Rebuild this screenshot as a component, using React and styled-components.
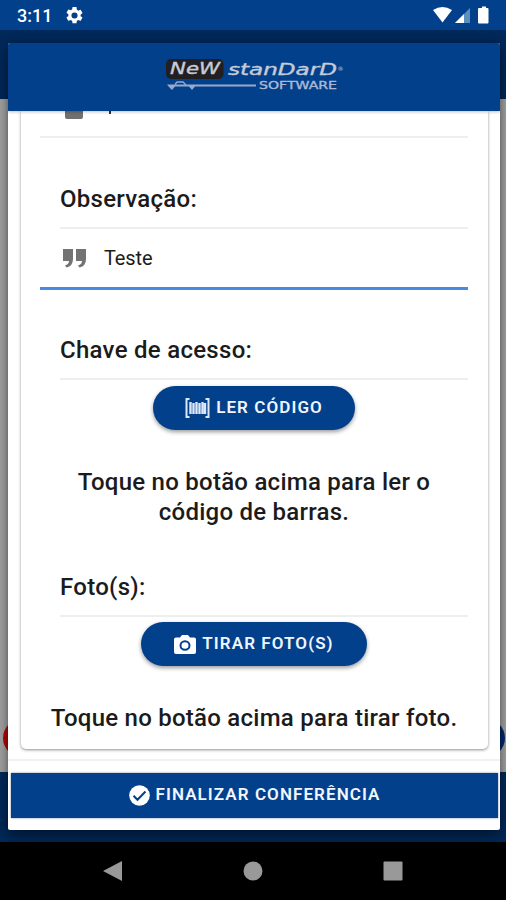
import React from "react";
import styled, { createGlobalStyle } from "styled-components";

const Global = createGlobalStyle`
  * { box-sizing: border-box; }
  body { margin: 0; background: #000; font-family: Roboto, "Noto Sans", sans-serif; color: #1b1b1b; }
`;

const Screen = styled.div`
  width: 506px;
  height: 900px;
  display: flex;
  flex-direction: column;
  overflow: hidden;
`;
const StatusBar = styled.header`
  height: 30px;
  flex: none;
  display: flex;
  align-items: center;
  justify-content: space-between;
  padding: 1px 14px 0 17px;
  background: #03408b;
  color: #fff;
`;
const StatusGroup = styled.div`
  display: flex;
  align-items: center;
  gap: ${(p) => p.$gap}px;
`;
const Clock = styled.span`
  font-size: 18px;
  font-weight: 500;
  width: 34px;
  white-space: nowrap;
`;
const Stage = styled.main`
  flex: 1;
  position: relative;
  display: flex;
  flex-direction: column;
`;
const BackHeader = styled.div`
  height: 69px;
  background: #002858;
`;
const BackBody = styled.div`
  flex: 1;
  background: #a3a3a3;
  display: flex;
  align-items: flex-end;
  justify-content: space-between;
  padding: 0 1px 15px 3px;
  overflow: hidden;
`;
const BackButton = styled.div`
  width: 70px;
  height: 38px;
  border-radius: 19px;
  background: ${(p) => p.$color};
`;
const BackFooter = styled.div`
  height: 70px;
  background: #00295a;
`;
const Modal = styled.section`
  position: absolute;
  left: 8px;
  top: 13px;
  width: 492px;
  height: 787px;
  display: flex;
  flex-direction: column;
  background: #fff;
  border-radius: 2px;
  overflow: hidden;
  box-shadow: 0 8px 16px rgba(0, 0, 0, 0.42), 0 0 4px rgba(0, 0, 0, 0.25);
`;
const ModalHeader = styled.div`
  height: 68px;
  flex: none;
  display: flex;
  padding: 13px 0 0 156px;
  background: #03408b;
  box-shadow: 0 1px 3px rgba(0, 0, 0, 0.25);
  z-index: 1;
`;
const Content = styled.div`
  flex: none;
  height: 650px;
  padding: 0 12px 12px 13px;
  border-bottom: 2px solid #f1f1f1;
`;
const Card = styled.div`
  height: 638px;
  display: flex;
  flex-direction: column;
  padding: 0 20px 0 19px;
  border-radius: 0 0 5px 5px;
  box-shadow: 0 1px 3px rgba(0, 0, 0, 0.45);
`;
const ClippedField = styled.div`
  height: 27px;
  flex: none;
  display: flex;
  align-items: flex-start;
  gap: 26px;
  padding-left: 25px;
  border-bottom: 2px solid #eee;
`;
const ClippedIcon = styled.div`
  width: 18px;
  height: 8px;
  border-radius: 0 0 2px 2px;
  background: #707070;
`;
const ClippedGlyph = styled.div`
  width: 2px;
  height: 3px;
  background: #333;
`;
const Heading = styled.h2`
  margin: 0 0 0 20px;
  flex: none;
  height: ${(p) => p.$height}px;
  display: flex;
  align-items: flex-end;
  padding-bottom: ${(p) => p.$bottom || 13}px;
  border-bottom: 2px solid #eee;
  font-size: 24px;
  line-height: 30px;
  font-weight: 500;
  letter-spacing: 0.28px;
`;
const Field = styled.div`
  height: 61px;
  flex: none;
  display: flex;
  align-items: center;
  gap: 17px;
  padding-left: 23px;
  border-bottom: 3px solid #4b8ae3;
  font-size: 20px;
  letter-spacing: -0.1px;
`;
const Pill = styled.button`
  align-self: center;
  flex: none;
  width: ${(p) => p.$width}px;
  height: 44px;
  margin: ${(p) => p.$top}px 0 0;
  padding: 0 0 2px;
  border: 0;
  border-radius: 22px;
  display: flex;
  align-items: center;
  justify-content: center;
  gap: 6px;
  background: #03408b;
  color: #f0f5ff;
  font: 600 17px Roboto, sans-serif;
  letter-spacing: 1.08px;
  white-space: nowrap;
  box-shadow: 0 2px 4px rgba(0, 0, 0, 0.4);
`;
const Hint = styled.p`
  margin: ${(p) => p.$top}px -12px 0;
  font-size: 24px;
  line-height: 29.5px;
  font-weight: 500;
  letter-spacing: 0.25px;
  text-align: center;
  white-space: nowrap;
`;
const Submit = styled.button`
  height: 45px;
  flex: none;
  margin: 12px 2px 0 3px;
  padding: 0 0 3px;
  border: 0;
  display: flex;
  align-items: center;
  justify-content: center;
  gap: 6px;
  background: #03408b;
  color: #f2f6ff;
  font: 600 17px Roboto, sans-serif;
  letter-spacing: 1.08px;
  white-space: nowrap;
  box-shadow: 0 0 2px #7787a2;
`;
const IconSlot = styled.span`
  display: flex;
  padding-top: 2px;
`;
const NavBar = styled.nav`
  height: 58px;
  flex: none;
  display: grid;
  grid-template-columns: repeat(3, 140px);
  justify-content: center;
  justify-items: center;
  align-items: center;
  background: #000;
`;

const Logo = () => (
  <svg width="182" height="38" viewBox="0 0 182 38" fontFamily="DejaVu Sans, sans-serif">
    <rect x="2" y="3" width="57.500" height="20" rx="5" fill="#211f22" />
    <g fill="#c5cbd7" stroke="#c5cbd7" strokeWidth=".35">
      <text x="6" y="18" fontSize="15" fontStyle="italic" textLength="50" lengthAdjust="spacingAndGlyphs">NeW</text>
      <text x="64" y="18.500" fontSize="15" fontStyle="italic" textLength="109" lengthAdjust="spacingAndGlyphs">stanDarD</text>
      <text x="173.500" y="15" fontSize="6" stroke="none">®</text>
      <text x="95" y="33" fontSize="10" textLength="78" lengthAdjust="spacingAndGlyphs" fill="#a9b9d6" stroke="#a9b9d6">SOFTWARE</text>
    </g>
    <path d="M11 28.500 13 26h6l3 3" fill="none" stroke="#97a9ce" strokeWidth="1.300" />
    <path d="M3 28.500h89v2H31l-3 3.500-3-3.500H11L8 34l-3-3Z" fill="#97a9ce" />
  </svg>
);

const Gear = () => (
  <svg width="17" height="17" viewBox="2 2 20 20" fill="#fff">
    <path d="M19.14 12.94c.04-.3.06-.61.06-.94s-.02-.64-.07-.94l2.03-1.58a.49.49 0 0 0 .12-.61l-1.92-3.32a.49.49 0 0 0-.59-.22l-2.39.96a7 7 0 0 0-1.62-.94l-.36-2.54A.48.48 0 0 0 13.92 2h-3.84a.48.48 0 0 0-.48.41l-.36 2.54c-.59.24-1.13.57-1.62.94l-2.39-.96a.49.49 0 0 0-.59.22L2.72 8.47a.48.48 0 0 0 .12.61l2.03 1.58c-.05.3-.09.63-.09.94s.02.64.07.94l-2.03 1.58a.49.49 0 0 0-.12.61l1.92 3.32c.12.22.37.29.59.22l2.39-.96c.5.38 1.03.7 1.62.94l.36 2.54c.05.24.24.41.48.41h3.84c.24 0 .44-.17.47-.41l.36-2.54c.59-.24 1.13-.56 1.62-.94l2.39.96c.22.08.47 0 .59-.22l1.92-3.32a.48.48 0 0 0-.12-.61l-2-1.22zM12 15.6a3.6 3.6 0 1 1 0-7.2 3.6 3.6 0 0 1 0 7.2z" />
  </svg>
);

const StatusIcons = () => (
  <svg width="60" height="20" viewBox="0 0 60 20" fill="#fff">
    <path d="M1 4Q10.500-2 20 4L10.500 16.500Z" />
    <path d="M38 2v15H23Z" fill="#5b8fbe" />
    <path d="M32 8v9h-9Z" />
    <path d="M48 2h2V.5h4V2h1.500q1 0 1 1v13.500q0 1-1 1H47q-1 0-1-1V3q0-1 1-1Z" />
  </svg>
);

const Quote = () => (
  <svg width="24" height="19" viewBox="0 0 24 19" fill="#737373">
    <path d="M0 0h10v10q0 7-6.500 8.500L2 16.500Q6 15 6 12H0ZM13 0h10v10q0 7-6.500 8.500L15 16.500q4-1.500 4-4.500h-6Z" />
  </svg>
);

const Barcode = () => (
  <svg width="25" height="20" viewBox="0 0 25 20" fill="none" stroke="#dce7f7">
    <path d="M4.500 1H1.500v18h3M20.500 1h3v18h-3" strokeWidth="2" />
    <path d="M5.500 4v12M8.500 5v11M11.500 4v12M14.500 5v11M17.500 4v12M20 5v11" strokeWidth="2.400" />
  </svg>
);

const Camera = () => (
  <svg width="22" height="19" viewBox="0 0 22 20" preserveAspectRatio="none">
    <path d="M2 2.500h4L8 0h6l2 2.500h4q2 0 2 2V18q0 2-2 2H2q-2 0-2-2V4.500q0-2 2-2Z" fill="#fff" />
    <circle cx="11" cy="11" r="4.500" fill="none" stroke="#03408b" strokeWidth="2" />
  </svg>
);

const Check = () => (
  <svg width="21" height="21" viewBox="0 0 21 21">
    <circle cx="10.500" cy="10.500" r="10.300" fill="#fff" />
    <path d="m4.500 10.800 4 4 8-8.300" fill="none" stroke="#03408b" strokeWidth="2" />
  </svg>
);

export default function App() {
  return (
    <Screen>
      <Global />
      <StatusBar>
        <StatusGroup $gap={15}>
          <Clock>3:11</Clock>
          <Gear />
        </StatusGroup>
        <StatusIcons />
      </StatusBar>
      <Stage>
        <BackHeader />
        <BackBody>
          <BackButton $color="#b50508" />
          <BackButton $color="#00286a" />
        </BackBody>
        <BackFooter />
        <Modal>
          <ModalHeader>
            <Logo />
          </ModalHeader>
          <Content>
            <Card>
              <ClippedField>
                <ClippedIcon />
                <ClippedGlyph />
              </ClippedField>
              <Heading $height={91}>Observação:</Heading>
              <Field>
                <Quote />
                <span>Teste</span>
              </Field>
              <Heading $height={90}>Chave de acesso:</Heading>
              <Pill $width={202} $top={6}>
                <IconSlot><Barcode /></IconSlot>
                LER CÓDIGO
              </Pill>
              <Hint $top={38}>
                Toque no botão acima para ler o<br />
                código de barras.
              </Hint>
              <Heading $height={90} $bottom={13}>Foto(s):</Heading>
              <Pill $width={226} $top={5}>
                <IconSlot><Camera /></IconSlot>
                TIRAR FOTO(S)
              </Pill>
              <Hint $top={38}>Toque no botão acima para tirar foto.</Hint>
            </Card>
          </Content>
          <Submit>
            <IconSlot><Check /></IconSlot>
            FINALIZAR CONFERÊNCIA
          </Submit>
        </Modal>
      </Stage>
      <NavBar>
        <svg width="20" height="22" viewBox="0 0 20 22"><path d="M0 11 19 1v20Z" fill="#999" /></svg>
        <svg width="20" height="20" viewBox="0 0 20 20"><circle cx="10" cy="10" r="9.500" fill="#999" /></svg>
        <svg width="20" height="20" viewBox="0 0 20 20"><rect x=".5" y=".5" width="19" height="19" rx="1" fill="#999" /></svg>
      </NavBar>
    </Screen>
  );
}
